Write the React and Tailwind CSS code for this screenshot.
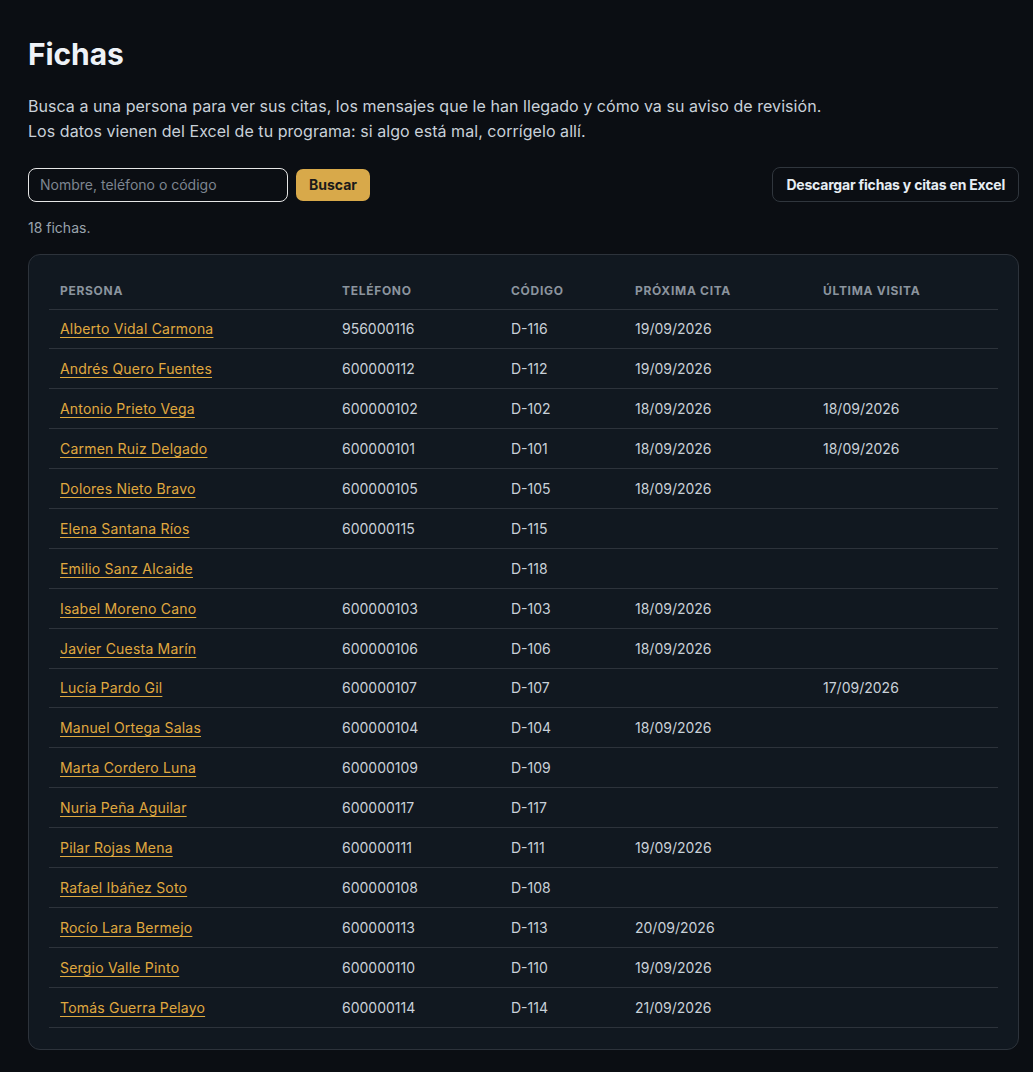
import { useState } from "react";

const fichas = [
  ["Alberto Vidal Carmona", "956000116", "D-116", "19/09/2026", ""],
  ["Andrés Quero Fuentes", "600000112", "D-112", "19/09/2026", ""],
  ["Antonio Prieto Vega", "600000102", "D-102", "18/09/2026", "18/09/2026"],
  ["Carmen Ruiz Delgado", "600000101", "D-101", "18/09/2026", "18/09/2026"],
  ["Dolores Nieto Bravo", "600000105", "D-105", "18/09/2026", ""],
  ["Elena Santana Ríos", "600000115", "D-115", "", ""],
  ["Emilio Sanz Alcaide", "", "D-118", "", ""],
  ["Isabel Moreno Cano", "600000103", "D-103", "18/09/2026", ""],
  ["Javier Cuesta Marín", "600000106", "D-106", "18/09/2026", ""],
  ["Lucía Pardo Gil", "600000107", "D-107", "", "17/09/2026"],
  ["Manuel Ortega Salas", "600000104", "D-104", "18/09/2026", ""],
  ["Marta Cordero Luna", "600000109", "D-109", "", ""],
  ["Nuria Peña Aguilar", "600000117", "D-117", "", ""],
  ["Pilar Rojas Mena", "600000111", "D-111", "19/09/2026", ""],
  ["Rafael Ibáñez Soto", "600000108", "D-108", "", ""],
  ["Rocío Lara Bermejo", "600000113", "D-113", "20/09/2026", ""],
  ["Sergio Valle Pinto", "600000110", "D-110", "19/09/2026", ""],
  ["Tomás Guerra Pelayo", "600000114", "D-114", "21/09/2026", ""],
];

function App() {
  const [query, setQuery] = useState("");

  return (
    <div className="bg-[#0b0e13] text-[#c9d1d9] font-['Inter',sans-serif] pl-[28px] pr-[14px] pt-[36px] pb-[22px]">
      {/* HEADER */}
      <h1 className="text-[30px] font-bold text-[#eef2f7] leading-[36px] tracking-[-0.1px]">
        Fichas
      </h1>

      <p className="mt-[22px] text-[16px] leading-[25px] text-[#c9d1d9] tracking-[0.05px]">
        Busca a una persona para ver sus citas, los mensajes que le han llegado y cómo va su aviso de revisión.
        <br />
        Los datos vienen del Excel de tu programa: si algo está mal, corrígelo allí.
      </p>

      {/* SEARCH */}
      <div className="mt-[23px] flex items-center justify-between">
        <div className="flex items-center gap-[8px]">
          <input
            value={query}
            onChange={(e) => setQuery(e.target.value)}
            placeholder="Nombre, teléfono o código"
            className="w-[260px] h-[34px] px-[11px] rounded-[8px] bg-[#0b0e13] border border-[#e6e6e6] text-[14px] text-[#c9d1d9] placeholder:text-[#7d8590] outline-none"
          />
          <button className="h-[32px] px-[13px] rounded-[7px] bg-[#d8a94a] text-[#1a1a1a] text-[14px] font-bold">
            Buscar
          </button>
        </div>
        <button className="h-[35px] px-[13px] rounded-[8px] border border-[#30363d] text-[14px] font-bold text-[#e6edf3] tracking-[-0.2px]">
          Descargar fichas y citas en Excel
        </button>
      </div>

      <p className="mt-[15px] text-[14px] text-[#9aa3ad]">18 fichas.</p>

      {/* TABLE CARD */}
      <div className="mt-[16px] bg-[#111820] border border-[#2d333b] rounded-[12px] px-[20px] pt-[18px] pb-[21px]">
        <table className="w-full border-collapse text-left">
          <colgroup>
            <col className="w-[282px]" />
            <col className="w-[169px]" />
            <col className="w-[124px]" />
            <col className="w-[188px]" />
            <col className="w-[186px]" />
          </colgroup>
          <thead>
            <tr className="border-b border-[#2d333b]">
              {["Persona", "Teléfono", "Código", "Próxima cita", "Última visita"].map((h) => (
                <th
                  key={h}
                  className="h-[36px] px-[11px] text-[12px] font-bold uppercase tracking-[0.7px] text-[#8b949e]"
                >
                  {h}
                </th>
              ))}
            </tr>
          </thead>
          <tbody>
            {fichas.map((f) => (
              <tr key={f[2]} className="border-b border-[#2d333b]">
                <td className="h-[39.9px] px-[11px] text-[14px]">
                  <a href="#" className="text-[#e0a93f] underline underline-offset-[3px] tracking-[0.2px]">
                    {f[0]}
                  </a>
                </td>
                <td className="px-[11px] text-[14px]">{f[1]}</td>
                <td className="px-[11px] text-[14px]">{f[2]}</td>
                <td className="px-[11px] text-[14px]">{f[3]}</td>
                <td className="px-[11px] text-[14px]">{f[4]}</td>
              </tr>
            ))}
          </tbody>
        </table>
      </div>
    </div>
  );
}

export default App;
